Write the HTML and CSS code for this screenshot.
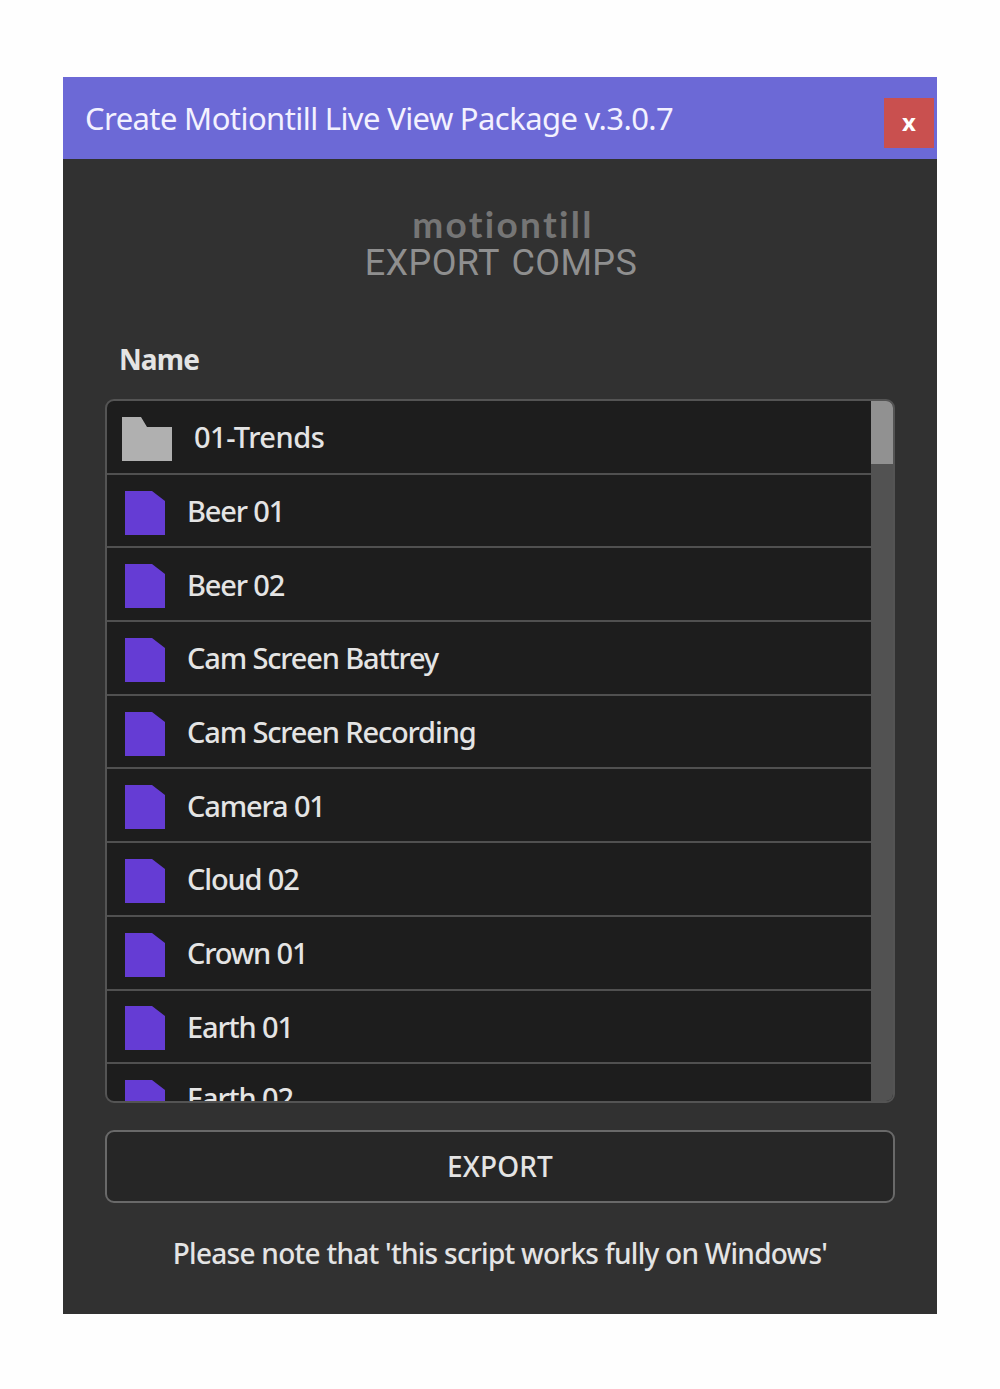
FILE: index.html
```html
<!DOCTYPE html>
<html lang="en">
<head>
<meta charset="utf-8">
<title>Create Motiontill Live View Package</title>
<link rel="stylesheet" href="styles.css">
</head>
<body>
<svg width="0" height="0" class="defs">
  <symbol id="file" viewBox="0 0 40 44"><path d="M0 0H27L40 10V44H0Z" fill="#653cd4"/></symbol>
  <symbol id="folder" viewBox="0 0 50 44"><path d="M0 0H19L25 10H50V44H0Z" fill="#b0b0b0"/></symbol>
</svg>
<main class="window">
  <header class="titlebar">
    <h1 class="title"><span>Create Motiontill Live View Package v.3.0.7</span></h1>
    <button class="close">x</button>
  </header>
  <div class="content">
    <div class="brand">
      <div class="logo">motiontill</div>
      <div class="subtitle">EXPORT COMPS</div>
    </div>
    <div class="label"><span>Name</span></div>
    <div class="list">
      <ul class="rows">
        <li class="row folder"><svg><use href="#folder"/></svg><span>01-Trends</span></li>
        <li class="row"><svg><use href="#file"/></svg><span>Beer 01</span></li>
        <li class="row"><svg><use href="#file"/></svg><span>Beer 02</span></li>
        <li class="row"><svg><use href="#file"/></svg><span>Cam Screen Battrey</span></li>
        <li class="row"><svg><use href="#file"/></svg><span>Cam Screen Recording</span></li>
        <li class="row"><svg><use href="#file"/></svg><span>Camera 01</span></li>
        <li class="row"><svg><use href="#file"/></svg><span>Cloud 02</span></li>
        <li class="row"><svg><use href="#file"/></svg><span>Crown 01</span></li>
        <li class="row"><svg><use href="#file"/></svg><span>Earth 01</span></li>
        <li class="row last"><svg><use href="#file"/></svg><span>Earth 02</span></li>
      </ul>
      <div class="track"><div class="thumb"></div></div>
    </div>
    <button class="export"><span>EXPORT</span></button>
    <p class="note"><span>Please note that 'this script works fully on Windows'</span></p>
  </div>
</main>
</body>
</html>
```

FILE: styles.css
```css
* { box-sizing: border-box; margin: 0; padding: 0; }
body { background: #fefefe; font-family: "Noto Sans", sans-serif; color: #e4e4e4; padding: 77px 63px 75px; }
.defs { display: block; }
.window { width: 874px; height: 1237px; background: #313131; }
.titlebar { height: 82px; background: #6c69d6; display: flex; justify-content: space-between; padding: 21px 3px 0 22px; }
.title { font-size: 31px; font-weight: 400; line-height: 40px; letter-spacing: -0.57px; word-spacing: -0.3px; color: #f3f1ff; white-space: nowrap; }
.close { width: 50px; height: 50px; border: 0; background: #c9504f; color: #fff; font: 700 24px/46px "Noto Sans", sans-serif; padding-bottom: 2px; }
.content { padding: 0 42px; }
.brand { height: 182px; padding-top: 47px; text-align: center; white-space: nowrap; }
.logo { font: 700 37px/35px Lato, sans-serif; letter-spacing: 2.3px; color: #757575; padding-left: 6px; }
.subtitle { font: 400 36px/45px Roboto, sans-serif; letter-spacing: 0.4px; word-spacing: 3px; color: #8f8f8f; padding-left: 2px; }
.label { height: 58px; padding-left: 14px; font-size: 28px; font-weight: 700; line-height: 36px; letter-spacing: -0.9px; }
.list { height: 704px; display: flex; border: 2px solid #545454; border-radius: 9px; overflow: hidden; background: #1d1d1d; }
.rows { flex: 1; list-style: none; }
.row { height: 73.7px; display: flex; align-items: center; padding-left: 18px; border-bottom: 2px solid #505050; font-size: 29px; font-weight: 500; letter-spacing: -1.15px; white-space: nowrap; }
.row svg { width: 40px; height: 44px; margin: 4px 22px 0 0; flex: none; }
.row.last span { padding-bottom: 5px; }
.row.folder { padding-left: 15px; letter-spacing: -0.5px; }
.row.folder svg { width: 50px; }
.track { width: 22px; background: #525252; }
.thumb { height: 63px; background: #919191; }
.export { display: block; width: 100%; height: 73px; margin-top: 27px; border: 2px solid #696969; border-radius: 9px; background: #262626; color: #e4e4e4; font: 500 28px/67px "Noto Sans", sans-serif; letter-spacing: 0.1px; }
.note { margin-top: 30px; text-align: center; font-size: 28px; font-weight: 500; line-height: 40px; letter-spacing: -0.73px; white-space: nowrap; }
```
